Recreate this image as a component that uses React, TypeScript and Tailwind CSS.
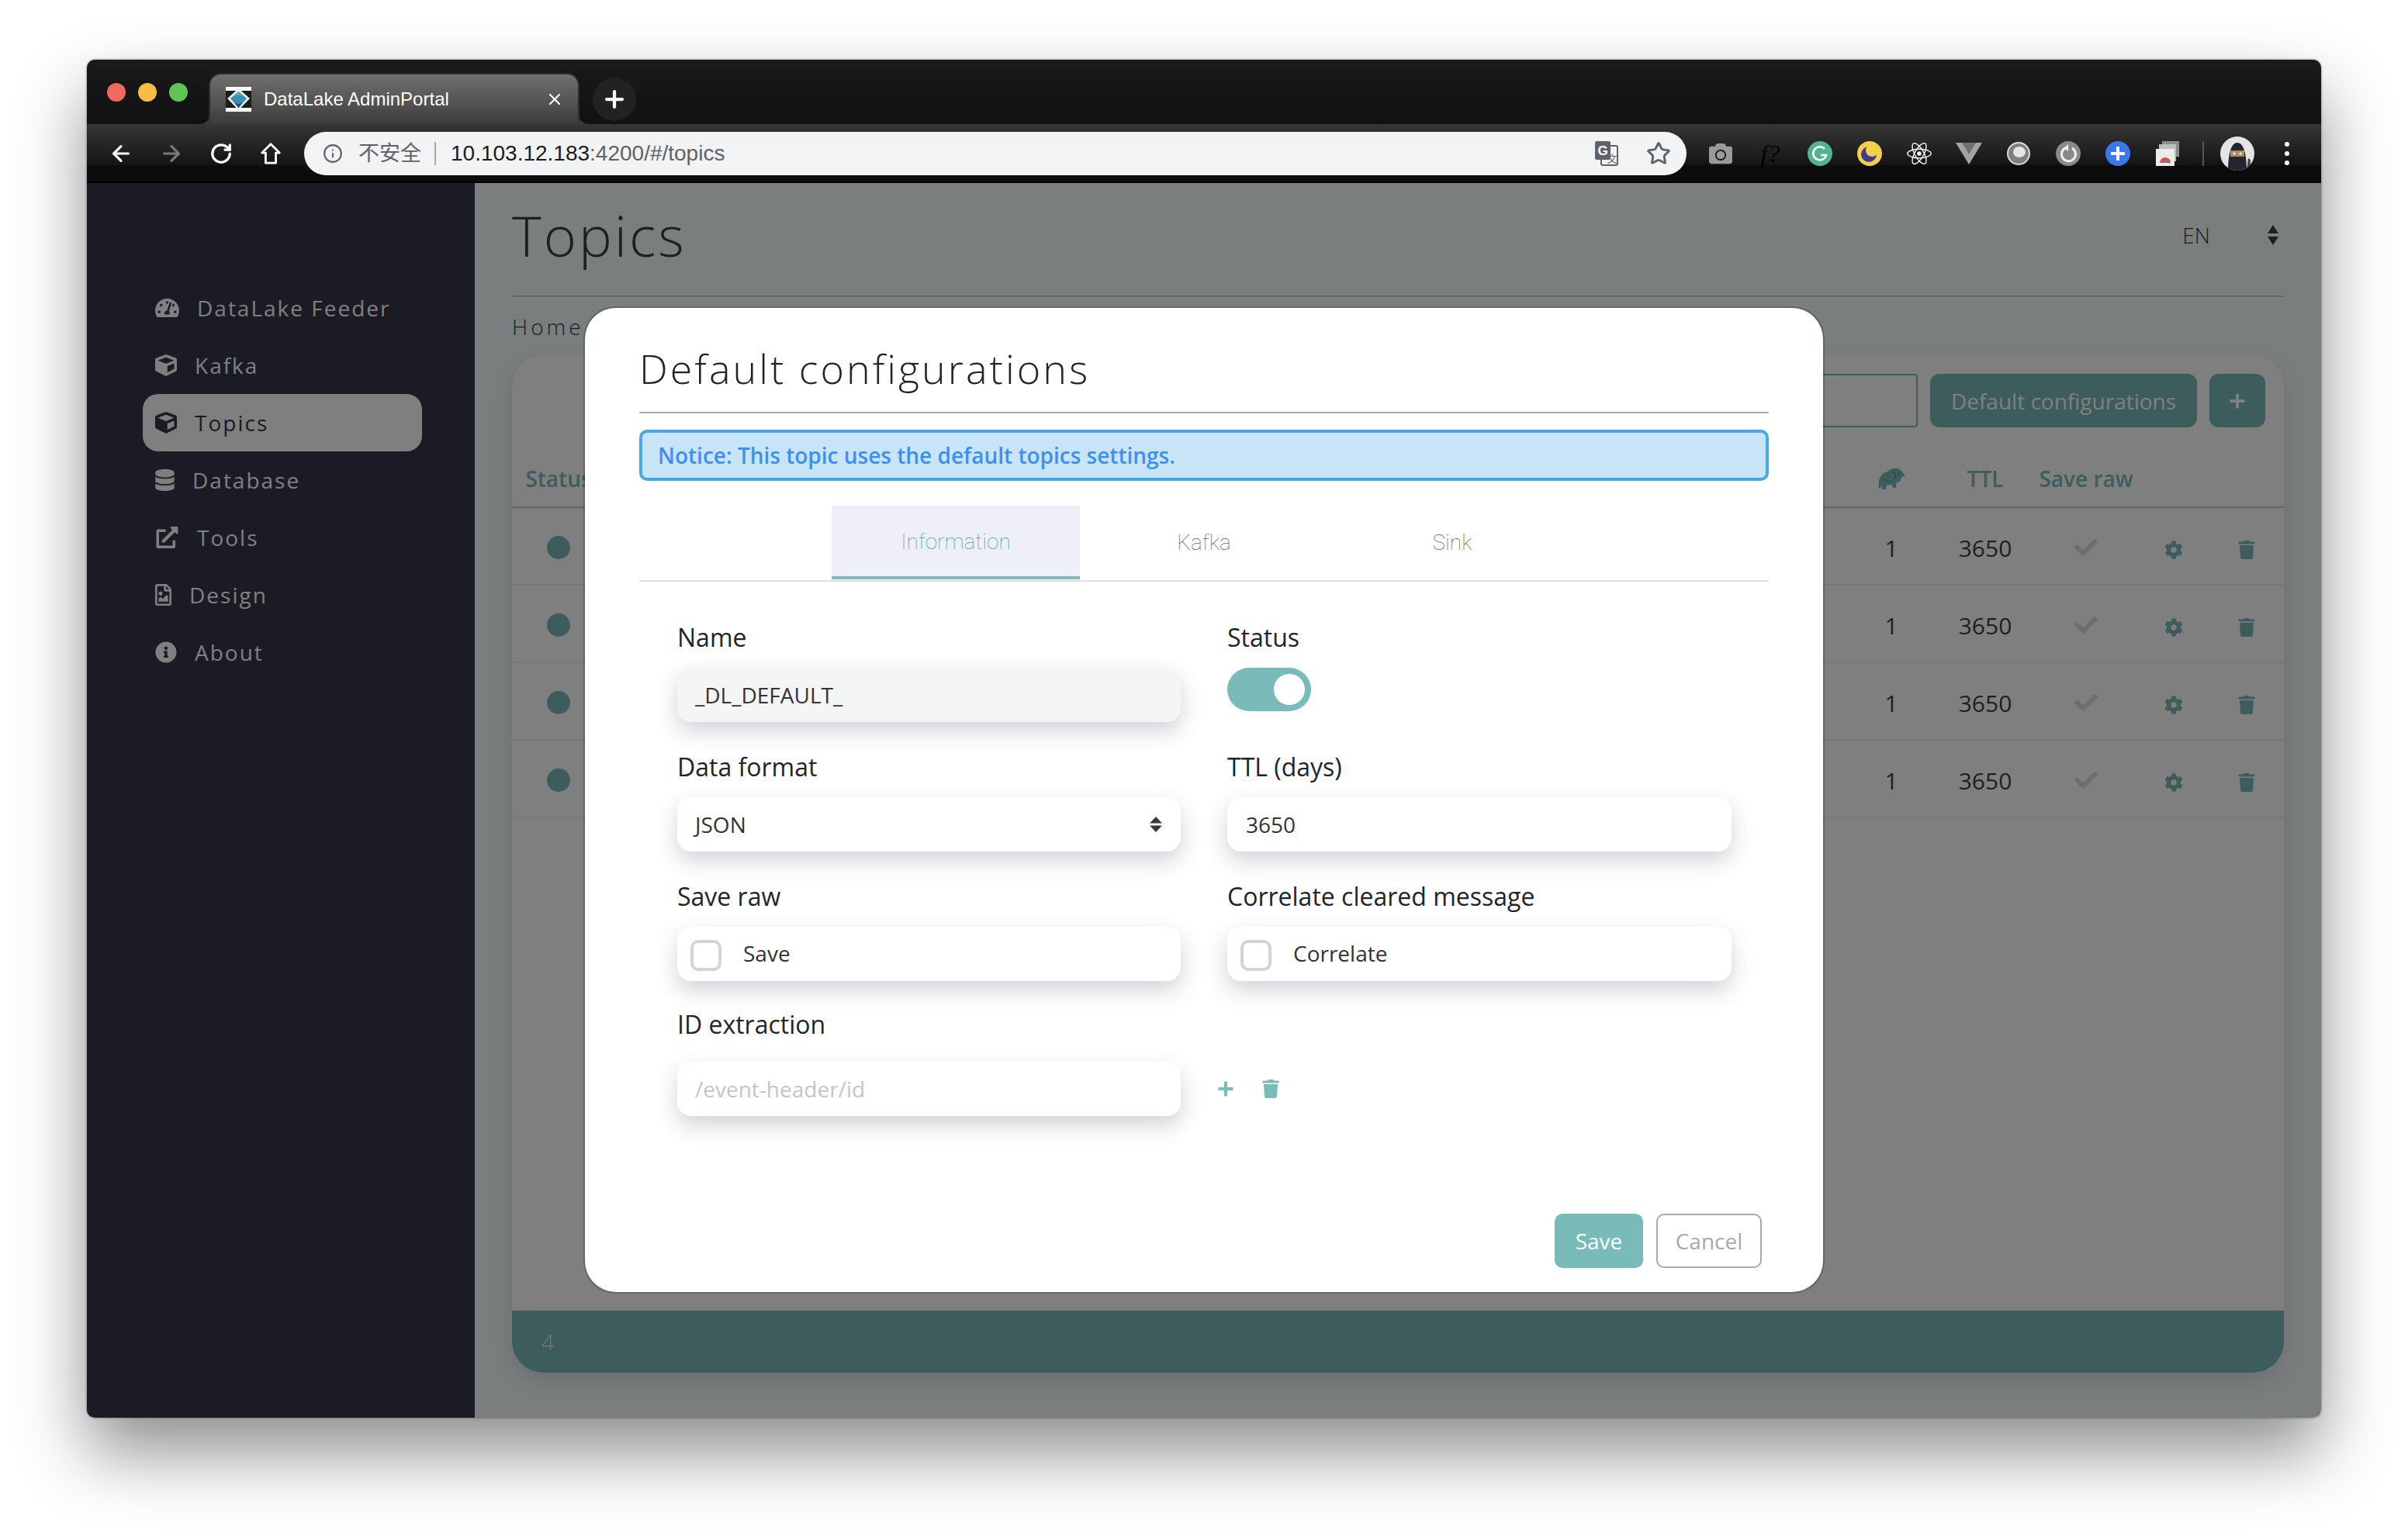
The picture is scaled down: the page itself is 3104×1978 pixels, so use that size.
import { ArrowLeft, ArrowRight, RotateCw, Star, Plus, X, Info } from "lucide-react";
import { FaTachometerAlt, FaCube, FaDatabase, FaExternalLinkAlt, FaRegFileImage, FaInfoCircle, FaCog, FaTrash, FaCheck, FaPlus, FaCamera, FaReact } from "react-icons/fa";

const NAV = [
  { label: "DataLake Feeder", icon: FaTachometerAlt, iconClass: "h-[28px] w-[31px]" },
  { label: "Kafka", icon: FaCube, iconClass: "h-[28px] w-[28px]" },
  { label: "Topics", icon: FaCube, iconClass: "h-[28px] w-[28px]", active: true },
  { label: "Database", icon: FaDatabase, iconClass: "h-[28px] w-[25px]" },
  { label: "Tools", icon: FaExternalLinkAlt, iconClass: "h-[28px] w-[31px]" },
  { label: "Design", icon: FaRegFileImage, iconClass: "h-[28px] w-[21px]" },
  { label: "About", icon: FaInfoCircle, iconClass: "h-[28px] w-[28px]" },
];

const OPEN = { fontFamily: '"Open Sans", sans-serif' };
const SYS = { fontFamily: '"Liberation Sans", "Noto Sans CJK SC", sans-serif' };

function Favicon() {
  return (
    <svg width="33" height="32" viewBox="0 0 33 32">
      <rect width="33" height="32" fill="#1c1c1c" />
      <rect width="33" height="5" fill="#fff" />
      <rect y="27" width="33" height="5" fill="#fff" />
      <path d="M16.5 2 L31 15 L16.5 30 L2 15 Z" fill="#e8eef0" />
      <path d="M16.5 6 L27 15 L16.5 27 L6 15 Z" fill="#3a8fb0" />
      <path d="M6 15 Q16.5 6 27 15 L16.5 8 Z" fill="#6fb7a8" />
      <path d="M11 20 Q16.5 24 22 20 L16.5 27 Z" fill="#1d4f8c" />
    </svg>
  );
}

function Elephant() {
  return (
    <svg width="40" height="30" viewBox="0 0 40 34" fill="#79bbb8">
      <path d="M2 24 C1 16 6 9 14 7 C18 2 28 0 33 4 C37 7 39 11 40 15 C37 13 35 14 34 18 C33 22 29 23 27 23 L27 31 L22 31 L21 26 L13 27 L12 33 L6 33 L6 27 C5 29 4 32 2 32 C1 29 1.5 26 2 24 Z" />
      <path d="M20 7 C25 7 28 12 25 18 M8 16 C10 20 14 22 19 21" fill="none" stroke="#4f8a87" strokeWidth="1.2" />
      <circle cx="31" cy="10" r="1" fill="#2f5b59" />
    </svg>
  );
}

function HomeIcon() {
  return (
    <svg width="28" height="30" viewBox="0 0 28 32" fill="none" stroke="#fff" strokeWidth="3" strokeLinejoin="round">
      <path d="M14 3 L26 15 H21 V29 H7 V15 H2 Z" />
    </svg>
  );
}

function Slot({ children }: { children: React.ReactNode }) {
  return <div className="flex h-[32px] w-[64px] items-center justify-center">{children}</div>;
}

function Extensions() {
  return (
    <>
      <Slot><FaCamera size={30} color="#9a9a9a" /></Slot>
      <Slot>
        <span className="text-[32px] italic leading-none text-black" style={{ fontFamily: '"Liberation Serif", serif' }}>f?</span>
      </Slot>
      <Slot>
        <svg width="32" height="32" viewBox="0 0 32 32">
          <circle cx="16" cy="16" r="16" fill="#52b48f" />
          <path d="M22 10 A8.5 8.5 0 1 0 24 18 H17" fill="none" stroke="#fff" strokeWidth="2.5" />
        </svg>
      </Slot>
      <Slot>
        <svg width="32" height="32" viewBox="0 0 32 32">
          <circle cx="16" cy="16" r="16" fill="#f4cf4a" />
          <circle cx="15" cy="17" r="10" fill="#3d3a94" />
          <circle cx="19" cy="12" r="8" fill="#f4cf4a" />
        </svg>
      </Slot>
      <Slot><FaReact size={32} color="#fff" /></Slot>
      <Slot>
        <svg width="34" height="28" viewBox="0 0 34 28">
          <path d="M0 0 H34 L17 28 Z" fill="#a3a3a3" />
          <path d="M8 0 H26 L17 15 Z" fill="#707070" />
        </svg>
      </Slot>
      <Slot>
        <svg width="30" height="30" viewBox="0 0 30 30">
          <circle cx="15" cy="15" r="14" fill="#7f7f7f" stroke="#ddd" strokeWidth="2" />
          <ellipse cx="16" cy="13" rx="8" ry="7" fill="#e6e6e6" />
        </svg>
      </Slot>
      <Slot>
        <svg width="32" height="32" viewBox="0 0 32 32">
          <circle cx="16" cy="16" r="16" fill="#8a8a8a" />
          <path d="M12 9 A9 9 0 1 0 21 9" fill="none" stroke="#eee" strokeWidth="3" />
          <path d="M16 4 V13 L10 9 Z" fill="#eee" />
        </svg>
      </Slot>
      <Slot>
        <svg width="32" height="32" viewBox="0 0 32 32">
          <circle cx="16" cy="16" r="16" fill="#3b78f0" />
          <path d="M16 7 V25 M7 16 H25" stroke="#fff" strokeWidth="4" />
        </svg>
      </Slot>
      <Slot>
        <svg width="30" height="32" viewBox="0 0 30 32">
          <rect x="8" y="0" width="22" height="20" fill="#8d8d8d" />
          <rect x="4" y="4" width="22" height="22" fill="#bdbdbd" />
          <rect x="0" y="10" width="24" height="22" fill="#ececec" />
          <path d="M5 28 A7 7 0 0 1 19 28 Z" fill="#d9503f" />
          <path d="M9 28 A3 3 0 0 1 15 28 Z" fill="#4285f4" />
          <path d="M15 28 A3 3 0 0 0 19 28 Z" fill="#f4c20d" />
        </svg>
      </Slot>
    </>
  );
}

function Toolbar() {
  return (
    <div className="flex h-[76px] items-start bg-[linear-gradient(#363636,#141414_70%,#0c0c0c_70%,#0c0c0c_97%,#000_97%)]">
      <div className="ml-[11px] mt-[22px] flex items-center">
        <div className="flex w-[65px] justify-center"><ArrowLeft size={32} color="#fff" strokeWidth={2.4} /></div>
        <div className="flex w-[65px] justify-center"><ArrowRight size={32} color="#7a7a7a" strokeWidth={2.4} /></div>
        <div className="flex w-[64px] justify-center"><RotateCw size={30} color="#fff" strokeWidth={2.6} /></div>
        <div className="flex w-[63px] justify-center"><HomeIcon /></div>
      </div>
      <div className="ml-[12px] mt-[10px] flex h-[56px] w-[1782px] items-center rounded-full bg-[#f1f3f4] pl-[24px] pr-[20px]" style={SYS}>
        <Info size={26} color="#5f6368" strokeWidth={2} />
        <span className="ml-[20px] text-[27px] text-[#5f6368]">不安全</span>
        <span className="ml-[17px] h-[30px] w-[2px] bg-[#a8abae]" />
        <span className="ml-[19px] text-[28px] text-[#1b1c1e]">10.103.12.183<span className="text-[#5f6368]">:4200/#/topics</span></span>
        <div className="ml-auto flex items-center gap-[36px]">
          <svg width="30" height="32" viewBox="0 0 30 32">
            <rect x="8" y="6" width="21" height="25" rx="2" fill="#f1f3f4" stroke="#5f6368" strokeWidth="2" />
            <rect x="0" y="0" width="20" height="24" rx="2" fill="#5f6368" />
            <text x="10" y="18" textAnchor="middle" fontSize="17" fontWeight="700" fill="#fff" fontFamily="Liberation Sans">G</text>
            <text x="22" y="27" textAnchor="middle" fontSize="13" fill="#5f6368" fontFamily="Noto Sans CJK SC">文</text>
          </svg>
          <Star size={32} color="#5f6368" strokeWidth={2.2} />
        </div>
      </div>
      <div className="ml-[12px] mt-[16px] flex items-center">
        <Extensions />
        <span className="ml-[13px] h-[32px] w-[2px] bg-[#555]" />
        <div className="ml-[21px] h-[44px] w-[44px] overflow-hidden rounded-full bg-[#e4e4e4]">
          <svg width="44" height="44" viewBox="0 0 44 44">
            <path d="M10 44 C10 30 12 8 22 8 C32 8 34 30 34 44 Z" fill="#23262c" />
            <rect x="13" y="18" width="18" height="8" fill="#b08a66" />
            <circle cx="18" cy="22" r="1.6" fill="#fff" />
            <circle cx="26" cy="22" r="1.6" fill="#fff" />
            <path d="M34 44 L36 28 L39 30 L38 44 Z" fill="#3c4048" />
          </svg>
        </div>
        <div className="ml-[39px] flex flex-col gap-[6px]">
          <span className="h-[6px] w-[6px] rounded-full bg-white" />
          <span className="h-[6px] w-[6px] rounded-full bg-white" />
          <span className="h-[6px] w-[6px] rounded-full bg-white" />
        </div>
      </div>
    </div>
  );
}

function TabStrip() {
  return (
    <div className="flex h-[83px] items-end bg-[linear-gradient(#1a1a1a,#111)]">
      <div className="ml-[26px] mb-[29px] flex gap-[16px]">
        <span className="h-[24px] w-[24px] rounded-full bg-[#f0695c]" />
        <span className="h-[24px] w-[24px] rounded-full bg-[#f8bd45]" />
        <span className="h-[24px] w-[24px] rounded-full bg-[#61c554]" />
      </div>
      <div className="relative ml-[27px] flex h-[66px] w-[478px] items-center rounded-t-[16px] border-x-2 border-t-2 border-[#2c2c2c] bg-[linear-gradient(#707070,#3c3c3c)] pl-[20px] pr-[18px]" style={SYS}>
        <svg width="14" height="14" viewBox="0 0 14 14" className="absolute -left-[15px] bottom-0"><path d="M14 0 V14 H0 Q14 14 14 0 Z" fill="#3c3c3c" /></svg>
        <svg width="14" height="14" viewBox="0 0 14 14" className="absolute -right-[15px] bottom-0"><path d="M0 0 V14 H14 Q0 14 0 0 Z" fill="#3c3c3c" /></svg>
        <Favicon />
        <span className="ml-[16px] text-[24px] text-white">DataLake AdminPortal</span>
        <X size={24} color="#fff" strokeWidth={2.2} className="ml-auto" />
      </div>
      <div className="mb-[4px] ml-[17px] flex h-[56px] w-[56px] items-center justify-center rounded-full bg-[#222]">
        <Plus size={34} color="#fff" strokeWidth={3} />
      </div>
    </div>
  );
}

function Sidebar() {
  return (
    <aside className="flex w-[500px] shrink-0 flex-col bg-[#353749] pt-[124px]" style={OPEN}>
      {NAV.map((n) => {
        const Icon = n.icon;
        return (
          <div key={n.label} className={`ml-[72px] flex h-[74px] w-[360px] items-center gap-[23px] rounded-[20px] pl-[16px] text-[28px] tracking-[2px] ${n.active ? "bg-white text-[#353749]" : "text-white"}`}>
            <Icon className={n.iconClass} />
            <span>{n.label}</span>
          </div>
        );
      })}
    </aside>
  );
}

function TableRow() {
  return (
    <div className="grid h-[100px] grid-cols-[120px_1fr_120px_122px_138px_88px_98px] items-center border-b-2 border-[#eeeeee] pt-[4px] text-center text-[30px] text-[#3e3e3e]">
      <div className="flex justify-center"><span className="h-[30px] w-[30px] rounded-full bg-[#79bbb8]" /></div>
      <div />
      <div>1</div>
      <div>3650</div>
      <div className="flex justify-center"><FaCheck size={30} color="#dddddd" /></div>
      <div className="flex justify-center pt-[6px]"><FaCog size={24} color="#79bbb8" /></div>
      <div className="flex justify-center pl-[2px] pt-[6px]"><FaTrash size={24} color="#79bbb8" /></div>
    </div>
  );
}

function Main() {
  return (
    <main className="flex flex-1 flex-col bg-[#f4fcfc] px-[48px]" style={OPEN}>
      <div className="flex h-[147px] items-center justify-between border-b-2 border-[#cccccc] pb-[12px]">
        <h1 className="text-[72px] font-light tracking-[3px] text-[#3e3e3e]">Topics</h1>
        <div className="flex items-center gap-[74px] pr-[7px] text-[28px] font-light text-[#3e3e3e]">
          <span>EN</span>
          <svg width="14" height="26" viewBox="0 0 14 26" fill="#3e3e3e"><path d="M7 0 L14 11 H0 Z M7 26 L0 15 H14 Z" /></svg>
        </div>
      </div>
      <div className="flex h-[75px] items-center text-[28px] font-light tracking-[4px] text-[#3e3e3e]">Home</div>
      <section className="flex h-[1312px] flex-col overflow-hidden rounded-[40px] bg-white shadow-[0_10px_30px_rgba(0,0,0,0.12)]">
        <div className="flex h-[122px] justify-end gap-[16px] pr-[24px] pt-[24px] text-[28px] text-white">
          <div className="h-[69px] w-[600px] rounded-[4px] border-2 border-[#79bbb8]" />
          <div className="flex h-[69px] w-[344px] items-center justify-center rounded-[12px] bg-[#79bbb8]">Default configurations</div>
          <div className="flex h-[69px] w-[72px] items-center justify-center rounded-[12px] bg-[#79bbb8]"><FaPlus size={22} /></div>
        </div>
        <div className="grid h-[75px] grid-cols-[120px_1fr_120px_122px_138px_88px_98px] items-center border-b-2 border-[#cccccc] text-center text-[28px] font-semibold text-[#79bbb8]">
          <div>Status</div>
          <div />
          <div className="flex justify-center"><Elephant /></div>
          <div>TTL</div>
          <div>Save raw</div>
          <div />
          <div />
        </div>
        <TableRow />
        <TableRow />
        <TableRow />
        <TableRow />
        <div className="mt-auto flex h-[80px] items-center bg-[#79bbb8] pl-[38px] text-[28px] font-light text-[#eeeeee]">4</div>
      </section>
    </main>
  );
}

function Shadowed({ className, children }: { className: string; children: React.ReactNode }) {
  return <div className={`rounded-[18px] shadow-[0_12px_28px_rgba(60,70,90,0.24)] ${className}`}>{children}</div>;
}

function Field({ label, className, children }: { label: string; className?: string; children: React.ReactNode }) {
  return (
    <div className={className}>
      <label className="mb-[15px] block h-[48px] text-[32px] leading-[48px] text-[#212529]">{label}</label>
      {children}
    </div>
  );
}

function CheckRow({ text }: { text: string }) {
  return (
    <Shadowed className="flex h-[70px] items-center bg-white pl-[17px] text-[28px] text-[#333]">
      <span className="mt-[4px] h-[40px] w-[40px] rounded-[10px] border-4 border-[#d4d4d6]" />
      <span className="mb-[3px] ml-[28px]">{text}</span>
    </Shadowed>
  );
}

function Modal() {
  return (
    <div className="h-[1269px] w-[1596px] rounded-[40px] bg-white px-[70px] shadow-[0_0_0_2px_rgba(0,0,0,0.2)]" style={OPEN}>
      <h2 className="flex h-[136px] items-center border-b-2 border-[#a9a9ad] pt-[22px] text-[52px] font-light tracking-[3px] text-[#212529]">Default configurations</h2>
      <div className="mt-[21px] flex h-[66px] items-center rounded-[10px] border-4 border-[#4aa7e0] bg-[#c7e5f7] pl-[20px] text-[28px] font-semibold text-[#3f8ff0]">
        Notice: This topic uses the default topics settings.
      </div>
      <div className="mt-[32px] flex h-[98px] justify-center border-b-2 border-[#dddddd] text-[28px] font-thin text-[#666]" style={{ fontFamily: "Roboto, sans-serif" }}>
        <div className="flex h-[95px] w-[320px] items-center justify-center border-b-4 border-[#79bbb8] bg-[#eeeff8] pt-[2px] text-[#4fa5a0]">Information</div>
        <div className="flex h-[95px] w-[320px] items-center justify-center">Kafka</div>
        <div className="flex h-[95px] w-[320px] items-center justify-center">Sink</div>
      </div>
      <div className="mt-[48px] grid grid-cols-[649px_650px] gap-x-[60px] gap-y-[34px] pl-[49px]">
        <Field label="Name">
          <Shadowed className="flex h-[70px] items-center bg-[#f4f5f7] pl-[23px] text-[28px] text-[#333]">_DL_DEFAULT_</Shadowed>
        </Field>
        <Field label="Status" className="h-[133px]">
          <div className="flex h-[56px] w-[108px] items-center justify-end rounded-full bg-[#79bbb8] pr-[8px]">
            <span className="h-[40px] w-[40px] rounded-full bg-white" />
          </div>
        </Field>
        <Field label="Data format">
          <Shadowed className="flex h-[70px] items-center justify-between bg-white pl-[23px] pr-[24px] text-[28px] text-[#333]">
            <span>JSON</span>
            <svg width="16" height="20" viewBox="0 0 16 20" fill="#343a40"><path d="M8 0 L16 8.5 H0 Z M8 20 L0 11.5 H16 Z" /></svg>
          </Shadowed>
        </Field>
        <Field label="TTL (days)">
          <Shadowed className="flex h-[70px] items-center bg-white pl-[24px] text-[28px] text-[#333]">3650</Shadowed>
        </Field>
        <Field label="Save raw"><CheckRow text="Save" /></Field>
        <Field label="Correlate cleared message"><CheckRow text="Correlate" /></Field>
        <Field label="ID extraction" className="col-span-2 -mt-[2px]">
          <div className="mt-[24px] flex items-center">
            <Shadowed className="flex h-[70px] w-[649px] items-center bg-white pl-[23px] text-[28px] text-[#c4c4cc]">/event-header/id</Shadowed>
            <FaPlus size={22} color="#79bbb8" className="ml-[47px]" />
            <FaTrash size={24} color="#79bbb8" className="ml-[35px]" />
          </div>
        </Field>
      </div>
      <div className="mt-[126px] flex justify-end gap-[17px] pr-[9px] text-[28px]">
        <div className="flex h-[70px] w-[114px] items-center justify-center rounded-[10px] bg-[#79bbb8] text-white">Save</div>
        <div className="flex h-[70px] w-[136px] items-center justify-center rounded-[10px] border-2 border-[#a9a9ad] text-[#a9a9ad]">Cancel</div>
      </div>
    </div>
  );
}

export default function App() {
  return (
    <div className="h-[1978px] w-[3104px] overflow-hidden bg-white pl-[112px] pt-[77px]">
      <div className="flex h-[1751px] w-[2880px] flex-col overflow-hidden rounded-[10px] shadow-[0_44px_90px_rgba(0,0,0,0.45),0_0_3px_rgba(0,0,0,0.5)]">
        <TabStrip />
        <Toolbar />
        <div className="relative flex flex-1">
          <Sidebar />
          <Main />
          <div className="absolute inset-0 flex justify-center bg-black/50 pt-[161px]">
            <Modal />
          </div>
        </div>
      </div>
    </div>
  );
}
